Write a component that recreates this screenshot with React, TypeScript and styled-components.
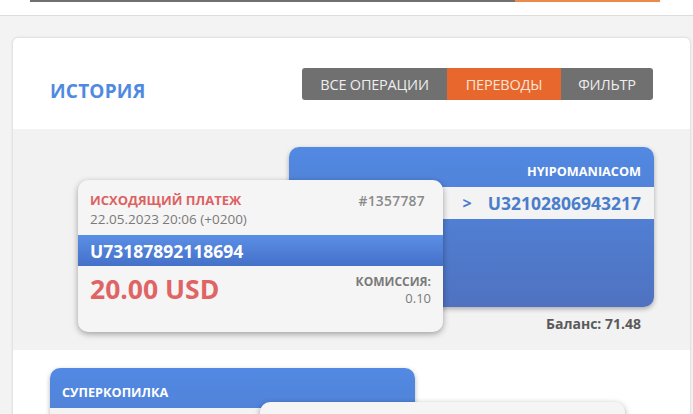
import React from "react";
import styled, { createGlobalStyle } from "styled-components";

const Global = createGlobalStyle`
  html, body {
    margin: 0;
    padding: 0;
    background: #f3f3f3;
    font-family: "Open Sans", "Noto Sans", sans-serif;
    overflow: hidden;
  }
  * { box-sizing: border-box; }
`;

const Page = styled.div`
  width: 693px;
  height: 414px;
  overflow: hidden;
`;

const TopStrip = styled.div`
  height: 16px;
  background: #fff;
  border-bottom: 1px solid #dcdcdc;
  display: flex;
  align-items: flex-start;
  padding: 0 33px 0 30px;
`;

const TopInput = styled.div`
  flex: 1;
  height: 2px;
  background: #707070;
`;

const TopButton = styled.div`
  width: 145px;
  height: 2px;
  background: #ec8a4c;
`;

const Content = styled.div`
  padding: 22px 3px 0 13px;
`;

const Card = styled.div`
  background: #fff;
  border-radius: 5px 5px 0 0;
  box-shadow: 0 0 3px rgba(0, 0, 0, 0.18);
  overflow: hidden;
`;

const CardHeader = styled.div`
  height: 91px;
  display: flex;
  align-items: flex-start;
  justify-content: space-between;
  padding: 30px 37px 0 37px;
`;

const Title = styled.h2`
  margin: 13px 0 0 0;
  font-size: 19px;
  line-height: 20px;
  font-weight: 700;
  color: #4f8ae0;
  letter-spacing: 0.2px;
`;

const Tabs = styled.div`
  display: flex;
  height: 32px;
  border-radius: 3px;
  overflow: hidden;
`;

const Tab = styled.div<{ $active?: boolean; $w: number }>`
  width: ${(p) => p.$w}px;
  display: flex;
  align-items: center;
  justify-content: center;
  background: ${(p) => (p.$active ? "#e8672c" : "#707070")};
  color: ${(p) => (p.$active ? "#fbe3d6" : "#eeeeee")};
  font-size: 14.5px;
  letter-spacing: -0.2px;
`;

const Section = styled.div<{ $gray?: boolean }>`
  background: ${(p) => (p.$gray ? "#f2f2f2" : "#ffffff")};
  display: grid;
  grid-template-areas: "stack";
`;

const TransferSection = styled(Section)`
  padding: 18px 36px 17px 65px;
`;

const LowerSection = styled(Section)`
  padding: 18px 0 0 37px;
  height: 80px;
`;

const BackColumn = styled.div<{ $align: "start" | "end" }>`
  grid-area: stack;
  justify-self: ${(p) => p.$align};
  width: 365px;
  display: flex;
  flex-direction: column;
`;

const BackCard = styled.div<{ $h: number }>`
  height: ${(p) => p.$h}px;
  border-radius: 10px;
  background: linear-gradient(180deg, #5289e2 0%, #4f72c0 100%);
  box-shadow: 0 2px 5px rgba(0, 0, 0, 0.3);
  display: flex;
  flex-direction: column;
  overflow: hidden;
`;

const BackHead = styled.div<{ $align: "left" | "right" }>`
  height: 40px;
  padding: 16px 13px 0 12px;
  text-align: ${(p) => p.$align};
  color: #ffffff;
  font-size: 12.7px;
  font-weight: 700;
  line-height: 16px;
`;

const BackBand = styled.div`
  height: 32px;
  background: #f3f3f3;
  display: flex;
  align-items: center;
  justify-content: flex-end;
  padding-right: 13px;
  color: #4a7dcc;
  font-size: 17.5px;
  font-weight: 700;
  gap: 16px;
`;

const Arrow = styled.span`
  font-size: 16px;
`;

const Balance = styled.div`
  margin-top: 7px;
  padding-right: 13px;
  text-align: right;
  font-size: 14px;
  font-weight: 700;
  color: #5a5a5a;
`;

const FrontCard = styled.div<{ $top: number; $left?: number }>`
  grid-area: stack;
  justify-self: start;
  align-self: start;
  margin-top: ${(p) => p.$top}px;
  margin-left: ${(p) => p.$left ?? 0}px;
  width: 365px;
  height: 152px;
  background: #f5f5f5;
  border-radius: 10px;
  box-shadow: 0 2px 6px rgba(0, 0, 0, 0.35);
  position: relative;
  z-index: 1;
  overflow: hidden;
  display: flex;
  flex-direction: column;
`;

const FrontTop = styled.div`
  height: 55px;
  padding: 11px 18px 0 12px;
  display: grid;
  grid-template-columns: 1fr auto;
  grid-template-rows: 18px 20px;
  align-items: center;
`;

const Kind = styled.div<{ $color: string }>`
  color: ${(p) => p.$color};
  font-size: 13px;
  font-weight: 700;
`;

const OpId = styled.div`
  color: #8a8a8a;
  font-size: 13.8px;
  font-weight: 600;
  letter-spacing: 0.3px;
`;

const DateText = styled.div`
  grid-column: 1 / 3;
  color: #7a7a7a;
  font-size: 13.5px;
`;

const FrontBand = styled.div`
  height: 31px;
  background: linear-gradient(180deg, #5b8fe6 0%, #4570c8 100%);
  display: flex;
  align-items: center;
  padding-left: 12px;
  color: #ffffff;
  font-size: 17.5px;
  font-weight: 700;
`;

const FrontBottom = styled.div`
  display: flex;
  justify-content: space-between;
  align-items: flex-start;
  padding: 5px 12px 0 12px;
`;

const Amount = styled.div`
  color: #e06464;
  font-size: 26.5px;
  font-weight: 700;
  line-height: 36px;
`;

const Fee = styled.div`
  margin-top: 3px;
  text-align: right;
  color: #7a7a7a;
  font-size: 12px;
  line-height: 16px;
`;

const FeeLabel = styled.div`
  font-weight: 700;
`;

const FeeValue = styled.div`
  font-size: 13px;
`;

export default function App() {
  return (
    <Page>
      <Global />
      <TopStrip>
        <TopInput />
        <TopButton />
      </TopStrip>
      <Content>
        <Card>
          <CardHeader>
            <Title>ИСТОРИЯ</Title>
            <Tabs>
              <Tab $w={145}>ВСЕ ОПЕРАЦИИ</Tab>
              <Tab $w={114} $active>
                ПЕРЕВОДЫ
              </Tab>
              <Tab $w={92}>ФИЛЬТР</Tab>
            </Tabs>
          </CardHeader>

          <TransferSection $gray>
            <BackColumn $align="end">
              <BackCard $h={160}>
                <BackHead $align="right">HYIPOMANIACOM</BackHead>
                <BackBand>
                  <Arrow>&gt;</Arrow>
                  <span>U32102806943217</span>
                </BackBand>
              </BackCard>
              <Balance>Баланс: 71.48</Balance>
            </BackColumn>
            <FrontCard $top={33}>
              <FrontTop>
                <Kind $color="#dc6262">ИСХОДЯЩИЙ ПЛАТЕЖ</Kind>
                <OpId>#1357787</OpId>
                <DateText>22.05.2023 20:06 (+0200)</DateText>
              </FrontTop>
              <FrontBand>U73187892118694</FrontBand>
              <FrontBottom>
                <Amount>20.00 USD</Amount>
                <Fee>
                  <FeeLabel>КОМИССИЯ:</FeeLabel>
                  <FeeValue>0.10</FeeValue>
                </Fee>
              </FrontBottom>
            </FrontCard>
          </TransferSection>

          <LowerSection>
            <BackColumn $align="start">
              <BackCard $h={160}>
                <BackHead $align="left">СУПЕРКОПИЛКА</BackHead>
                <BackBand />
              </BackCard>
            </BackColumn>
            <FrontCard $top={34} $left={210}>
              <FrontTop>
                <Kind $color="#5bb85b">ВХОДЯЩИЙ ПЛАТЕЖ</Kind>
                <OpId>#1357786</OpId>
              </FrontTop>
            </FrontCard>
          </LowerSection>
        </Card>
      </Content>
    </Page>
  );
}
